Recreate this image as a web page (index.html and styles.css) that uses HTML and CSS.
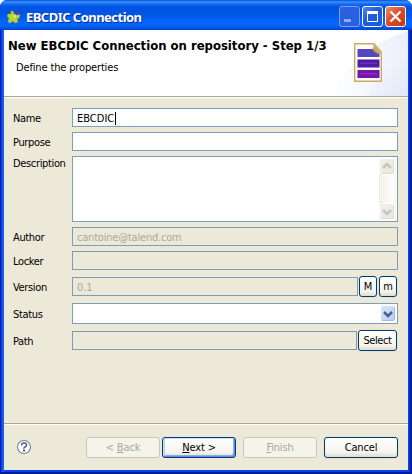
FILE: index.html
```html
<!DOCTYPE html>
<html lang="en">
<head>
<meta charset="utf-8">
<title>EBCDIC Connection</title>
<link rel="stylesheet" href="styles.css">
</head>
<body>
<div class="window">
  <header class="titlebar">
    <svg class="app-icon" width="14" height="16" viewBox="0 0 14 16"><path d="M4 3h2l1 3 6 1-1 3-2 1 1 3-3 1-2-2-3 2-2-1 1-4-2-2 1-2 3 0z" fill="#b5d832" stroke="#8eae25" stroke-width=".6"/><path d="M6 7h3v3H7z" fill="#d5ea62"/><path d="M8 4l2 2 3-5" fill="none" stroke="#4939be" stroke-width="2"/></svg>
    <h1 class="caption">EBCDIC Connection</h1>
    <div class="controls">
      <span class="control minimize"><svg width="21" height="21"><path d="M5 13h7v3H5z" fill="#8cacf3"/></svg></span>
      <span class="control"><svg width="21" height="21"><path d="M5.500 5.500h10v10h-10z" fill="none" stroke="#fff"/><path d="M5 5h11v3H5z" fill="#fff"/></svg></span>
      <span class="control close"><svg width="21" height="21"><path d="M5.500 5.500l10 10M15.500 5.500l-10 10" stroke="#fff" stroke-width="2.300"/></svg></span>
    </div>
  </header>
  <main class="dialog">
    <section class="banner">
      <div class="banner-text">
        <h2 class="heading">New EBCDIC Connection on repository - Step 1/3</h2>
        <p class="subtitle">Define the properties</p>
      </div>
      <svg class="banner-art" width="84" height="66" viewBox="0 0 84 66">
        <defs>
          <linearGradient id="sweep" x1="0" y1="0" x2="1" y2="1"><stop offset="0" stop-color="#fff"/><stop offset="1" stop-color="#dce3f7"/></linearGradient>
          <linearGradient id="fade"><stop offset="0" stop-color="#fff"/><stop offset="1" stop-color="#ebeffa"/></linearGradient>
          <linearGradient id="fold" x1="0" y1="1" x2="1" y2="0"><stop offset="0" stop-color="#b58a38"/><stop offset="1" stop-color="#ecd9a0"/></linearGradient>
        </defs>
        <path d="M6 66Q30 18 84 1V66z" fill="url(#fade)"/>
        <path d="M43 66Q52 32 84 21V66z" fill="url(#sweep)" opacity=".7"/>
        <path d="M30.700 13.700H50L57.300 22V51.300H30.700z" fill="#fffdf5" stroke="#c8aa66" stroke-width="1.400"/>
        <path d="M33.500 19h16l6 4.500V27h-22z" fill="#5149bd"/>
        <path d="M33.500 29.500h22v8h-22z" fill="#5119a7"/><path d="M36 32.500h17v1.500H36z" fill="#6532b5"/>
        <path d="M33.500 40h22v8h-22z" fill="#7615a9"/><path d="M36 43h17v1.500H36z" fill="#8732b5"/>
        <path d="M49.500 13.500L58 22.500V24Q50 24 48.500 19Q50 17 49.500 13.500z" fill="url(#fold)"/>
      </svg>
    </section>
    <form class="form">
      <div class="row name"><label>Name</label><div class="field typed">EBCDIC<i class="caret"></i></div></div>
      <div class="row purpose"><label>Purpose</label><div class="field"></div></div>
      <div class="row description"><label class="description-label">Description</label>
        <div class="field area"><div class="scrollbar">
          <span class="arrow"><svg width="14" height="15"><path d="M3 9l4-4 4 4" fill="none" stroke="#c7c6bb" stroke-width="2.500"/></svg></span>
          <span class="arrow"><svg width="14" height="15"><path d="M3 6l4 4 4-4" fill="none" stroke="#c7c6bb" stroke-width="2.500"/></svg></span>
        </div></div>
      </div>
      <div class="row author"><label>Author</label><div class="field readonly email">cantoine@talend.com</div></div>
      <div class="row locker"><label>Locker</label><div class="field readonly"></div></div>
      <div class="row version"><label>Version</label><div class="field readonly number">0.1</div><button type="button" class="button mini major">M</button><button type="button" class="button mini minor">m</button></div>
      <div class="row status"><label>Status</label><div class="field combo"><span class="drop"><svg width="14" height="15"><path d="M3 6l4 4 4-4" fill="none" stroke="#4d6185" stroke-width="2.500"/></svg></span></div></div>
      <div class="row path"><label>Path</label><div class="field readonly"></div><button type="button" class="button select">Select</button></div>
    </form>
    <footer class="footer">
      <svg class="help" width="16" height="16" viewBox="0 0 16 16"><circle cx="8" cy="8" r="6.500" fill="#fff" stroke="#70809f" stroke-width="1.100"/><path d="M5.600 6.500V6q0-2 2.500-2t2.500 2q0 1.200-1.500 2T7.900 9.700" fill="none" stroke="#49618c" stroke-width="1.500"/><path d="M7 10.500h2v2H7z" fill="#49618c"/></svg>
      <button type="button" class="button wide disabled back">&lt; <u>B</u>ack</button>
      <button type="button" class="button wide default"><u>N</u>ext &gt;</button>
      <button type="button" class="button wide disabled finish"><u>F</u>inish</button>
      <button type="button" class="button wide cancel">Cancel</button>
    </footer>
  </main>
</div>
</body>
</html>
```
FILE: styles.css
```css
* { box-sizing: border-box; }
body { margin: 0; background: #fff; font: 11px/13px "DejaVu Sans Condensed", "DejaVu Sans", sans-serif; font-stretch: condensed; letter-spacing: -.15px; color: #000; }
.window { width: 412px; height: 474px; padding: 0 4px 4px; border-radius: 7px 7px 0 0; overflow: hidden; background: linear-gradient(90deg, #0019b5 0 1px, #003de0 1px 2px, #1461e8 2px 4px, #0046e8 4px 409px, #0036d5 409px 410px, #001b9b 410px); box-shadow: inset 0 -2px #001b9b; }
.titlebar { height: 30px; margin: 0 -4px; padding: 6px 6px 0 7px; display: flex; align-items: flex-start; background: linear-gradient(#0751d2 0, #3b91ff 2px, #126cf0 4px, #0054e3 7px, #0054e3 13px, #0365fc 22px, #0464f8 26px, #0043cf 30px); }
.app-icon { margin-top: 2px; }
.caption { margin: 3px auto 0 5px; font: bold 13px/16px "Noto Sans", sans-serif; letter-spacing: -.53px; color: #fff; text-shadow: 1px 1px #0a2c91; white-space: nowrap; }
.controls { display: flex; gap: 2px; }
.control { width: 21px; height: 21px; border: 1px solid #fff; border-radius: 3px; background: linear-gradient(135deg, #5285ef, #2459d8 45%, #1a5beb); }
.control svg { display: block; margin: -1px; }
.minimize { border-color: #7d9ef0; background: #2860df; }
.close { background: linear-gradient(135deg, #ed8c70, #db4924 50%, #c83b13); }
.dialog { width: 404px; height: 440px; background: #ece9d8; }
.banner { height: 67px; display: flex; justify-content: space-between; background: #fff; border-bottom: 1px solid #aca899; box-shadow: 0 1px #fff; }
.banner-text { padding: 8px 0 0 4px; width: 320px; }
.heading { margin: 0; font: bold 13px/15px "DejaVu Sans Condensed", sans-serif; font-stretch: condensed; letter-spacing: -.02px; white-space: nowrap; }
.subtitle { margin: 8px 0 0 8px; }
.banner-art { flex: none; }
.form { height: 326px; padding: 11px 10px 0 9px; }
.row { display: flex; align-items: center; height: 19px; margin-bottom: 5px; }
.row label { width: 59px; flex: none; padding-top: 1px; letter-spacing: -.35px; white-space: nowrap; }
.field { flex: 1; height: 100%; padding: 3px 4px 0; border: 1px solid #7f9db9; background: #fff; white-space: nowrap; }
.typed { letter-spacing: 0; }
.caret { display: inline-block; width: 1px; height: 13px; margin-left: 1px; background: #000; vertical-align: top; }
.readonly { background: #ece9d8; color: #aca899; }
.email { letter-spacing: -.2px; }
.description { height: 66px; align-items: flex-start; }
.area { padding: 1px; display: flex; justify-content: flex-end; }
.scrollbar { width: 17px; display: flex; flex-direction: column; justify-content: space-between; background: linear-gradient(90deg, #eeede5, #f5f3ed 20%, #fffefd 90%, #eeede5); }
.arrow, .drop { width: 16px; height: 17px; border: 1px solid #fff; border-radius: 3px; background: linear-gradient(135deg, #f1f1eb, #e8e8df); box-shadow: inset -1px -1px #dddccf; }
.arrow svg, .drop svg { display: block; }
.locker { margin-bottom: 7px; }
.version { height: 19px; margin-bottom: 7px; }
.button { height: 21px; padding: 0; border: 1px solid #003c74; border-radius: 3px; background: linear-gradient(#fff, #f5f4ed 75%, #dfdccf); color: #000; font: inherit; letter-spacing: inherit; line-height: 19px; text-align: center; white-space: nowrap; flex: none; box-shadow: 0 0 0 1px #e7e3d2; }
.mini { width: 18px; }
.major { margin-left: 1px; }
.minor { margin: 0 1px 0 2px; }
.status { height: 21px; margin-bottom: 7px; }
.combo { display: flex; justify-content: flex-end; padding: 1px; }
.drop { background: linear-gradient(135deg, #dce6ff, #b5c9f7); box-shadow: inset -1px -1px #a7bbe8; }
.select { width: 39px; margin: 0 1px; letter-spacing: -.4px; }
.footer { height: 47px; border-top: 1px solid #aca899; box-shadow: inset 0 1px #fff; display: flex; padding: 13px 10px 0 12px; }
.help { margin-top: 2px; }
.wide { width: 74px; }
.disabled { color: #aaa797; border-color: #c9c7ba; background: #f5f4ea; box-shadow: none; }
.back { margin-left: 54px; }
.default { margin-left: 2px; box-shadow: inset 1px 1px #cee0fc, inset -1px -1px #6982ee, inset 2px 0 #b5ccf5, inset -2px -2px #89ade4; }
.finish, .cancel { margin-left: 7px; }
```
